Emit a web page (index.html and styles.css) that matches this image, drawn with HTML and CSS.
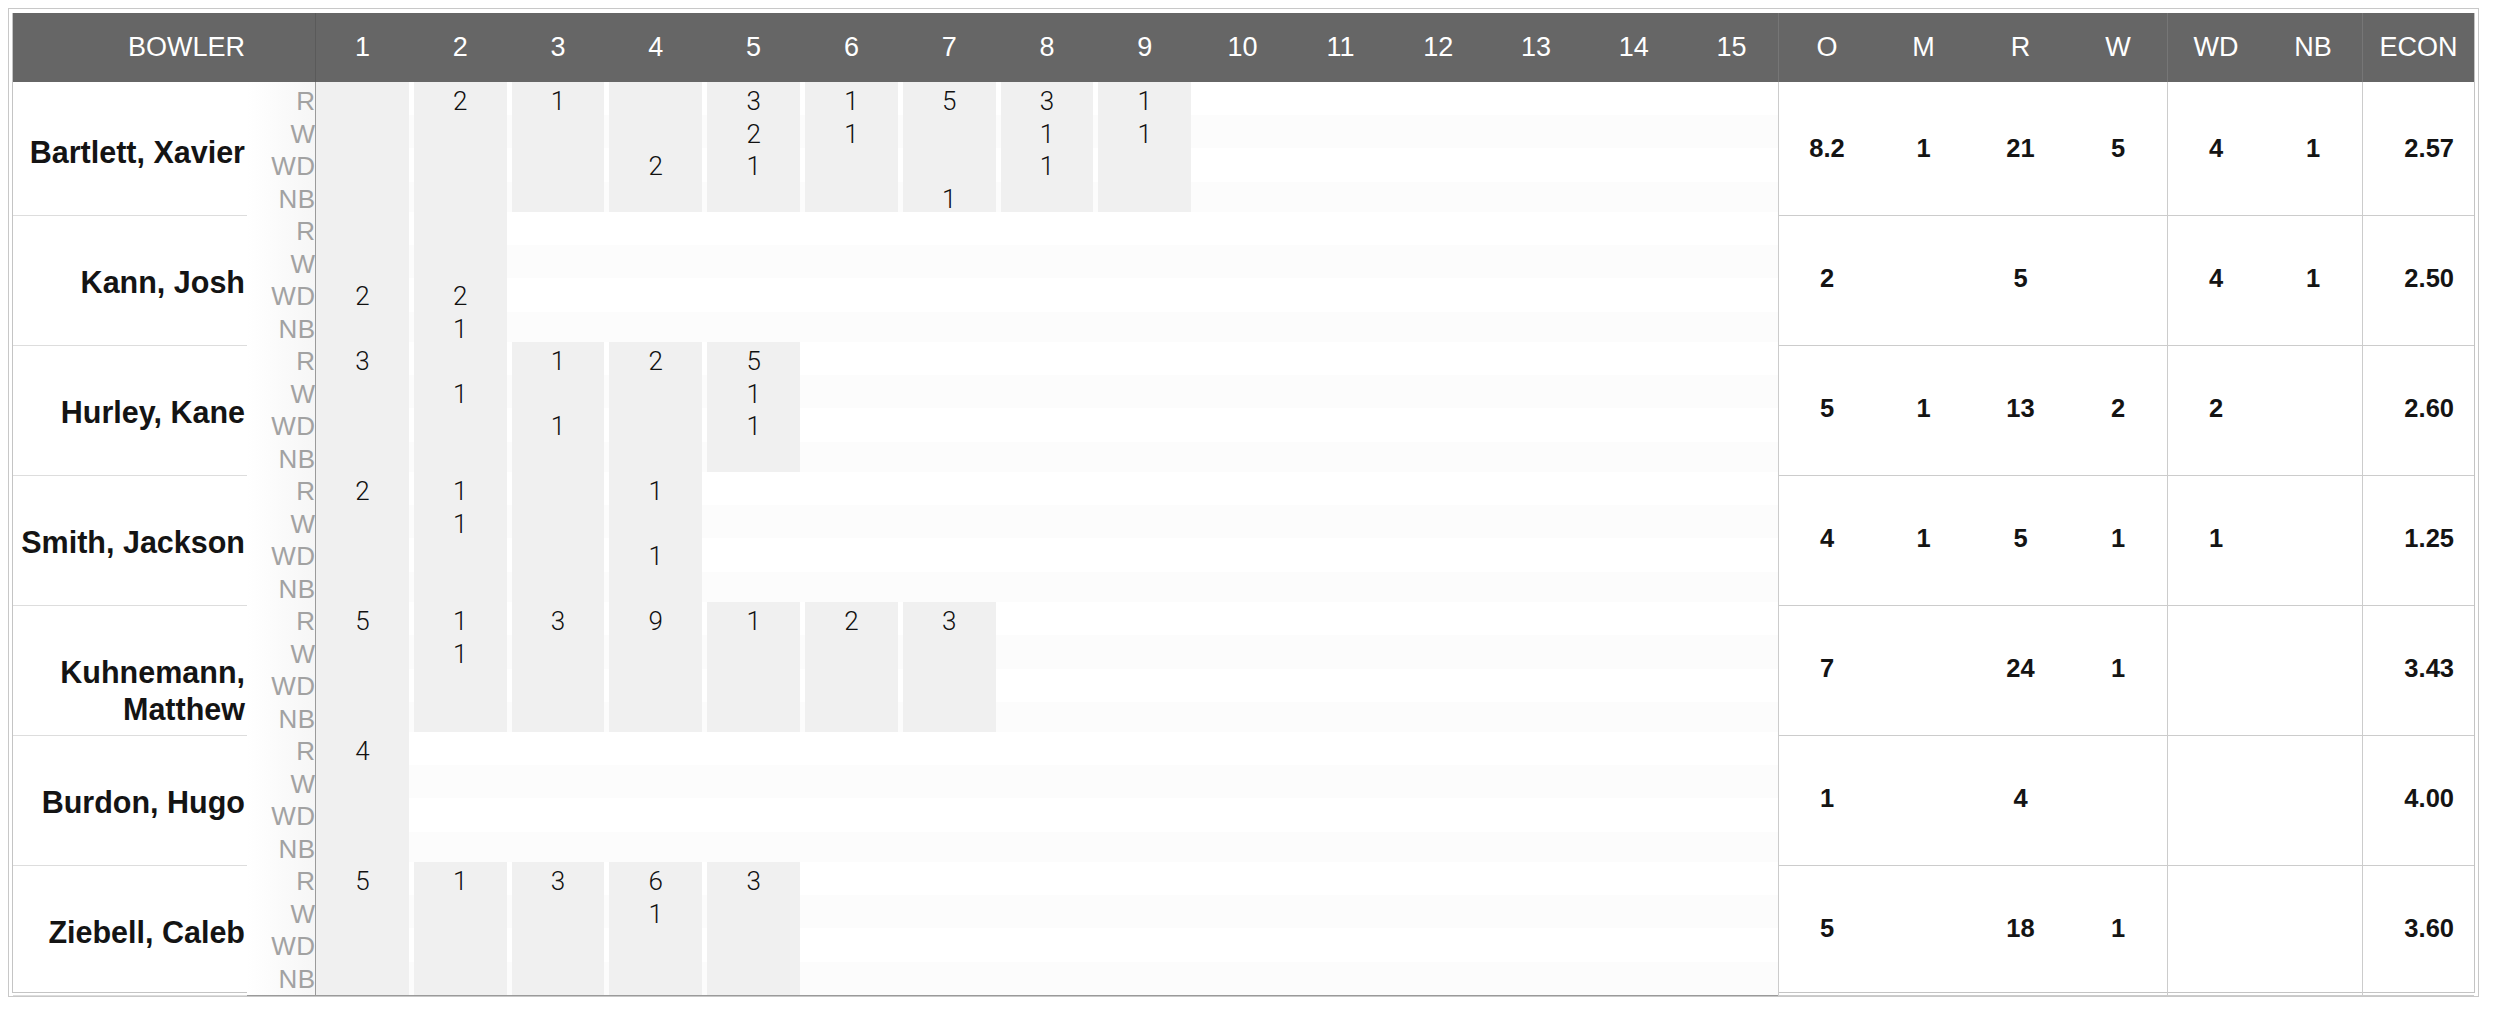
FILE: index.html
```html
<!DOCTYPE html>
<html>
<head>
<meta charset="utf-8">
<title>Bowling scorecard</title>
<link rel="stylesheet" href="styles.css">
</head>
<body>
<div class="sheet">
  <div class="table">
    <div class="head">
      <div class="bowler">BOWLER</div>
      <div class="overs-h">
        <span>1</span><span>2</span><span>3</span><span>4</span><span>5</span><span>6</span><span>7</span><span>8</span><span>9</span><span>10</span><span>11</span><span>12</span><span>13</span><span>14</span><span>15</span>
      </div>
      <div class="hs sep">O</div><div class="hs">M</div><div class="hs">R</div><div class="hs">W</div>
      <div class="hs sep">WD</div><div class="hs">NB</div>
      <div class="hs sep">ECON</div>
    </div>

    <div class="row">
      <div class="name">Bartlett, Xavier</div>
      <div class="labels"><i>R</i><i>W</i><i>WD</i><i>NB</i></div>
      <div class="overs">
        <div class="ov"><i></i><i></i><i></i><i></i></div>
        <div class="ov"><i>2</i><i></i><i></i><i></i></div>
        <div class="ov"><i>1</i><i></i><i></i><i></i></div>
        <div class="ov"><i></i><i></i><i>2</i><i></i></div>
        <div class="ov"><i>3</i><i>2</i><i>1</i><i></i></div>
        <div class="ov"><i>1</i><i>1</i><i></i><i></i></div>
        <div class="ov"><i>5</i><i></i><i></i><i>1</i></div>
        <div class="ov"><i>3</i><i>1</i><i>1</i><i></i></div>
        <div class="ov"><i>1</i><i>1</i><i></i><i></i></div>
      </div>
      <div class="st sep">8.2</div><div class="st">1</div><div class="st">21</div><div class="st">5</div>
      <div class="st sep">4</div><div class="st">1</div>
      <div class="st sep econ">2.57</div>
    </div>

    <div class="row">
      <div class="name">Kann, Josh</div>
      <div class="labels"><i>R</i><i>W</i><i>WD</i><i>NB</i></div>
      <div class="overs">
        <div class="ov"><i></i><i></i><i>2</i><i></i></div>
        <div class="ov"><i></i><i></i><i>2</i><i>1</i></div>
      </div>
      <div class="st sep">2</div><div class="st"></div><div class="st">5</div><div class="st"></div>
      <div class="st sep">4</div><div class="st">1</div>
      <div class="st sep econ">2.50</div>
    </div>

    <div class="row">
      <div class="name">Hurley, Kane</div>
      <div class="labels"><i>R</i><i>W</i><i>WD</i><i>NB</i></div>
      <div class="overs">
        <div class="ov"><i>3</i><i></i><i></i><i></i></div>
        <div class="ov"><i></i><i>1</i><i></i><i></i></div>
        <div class="ov"><i>1</i><i></i><i>1</i><i></i></div>
        <div class="ov"><i>2</i><i></i><i></i><i></i></div>
        <div class="ov"><i>5</i><i>1</i><i>1</i><i></i></div>
      </div>
      <div class="st sep">5</div><div class="st">1</div><div class="st">13</div><div class="st">2</div>
      <div class="st sep">2</div><div class="st"></div>
      <div class="st sep econ">2.60</div>
    </div>

    <div class="row">
      <div class="name">Smith, Jackson</div>
      <div class="labels"><i>R</i><i>W</i><i>WD</i><i>NB</i></div>
      <div class="overs">
        <div class="ov"><i>2</i><i></i><i></i><i></i></div>
        <div class="ov"><i>1</i><i>1</i><i></i><i></i></div>
        <div class="ov"><i></i><i></i><i></i><i></i></div>
        <div class="ov"><i>1</i><i></i><i>1</i><i></i></div>
      </div>
      <div class="st sep">4</div><div class="st">1</div><div class="st">5</div><div class="st">1</div>
      <div class="st sep">1</div><div class="st"></div>
      <div class="st sep econ">1.25</div>
    </div>

    <div class="row">
      <div class="name">Kuhnemann,<br>Matthew</div>
      <div class="labels"><i>R</i><i>W</i><i>WD</i><i>NB</i></div>
      <div class="overs">
        <div class="ov"><i>5</i><i></i><i></i><i></i></div>
        <div class="ov"><i>1</i><i>1</i><i></i><i></i></div>
        <div class="ov"><i>3</i><i></i><i></i><i></i></div>
        <div class="ov"><i>9</i><i></i><i></i><i></i></div>
        <div class="ov"><i>1</i><i></i><i></i><i></i></div>
        <div class="ov"><i>2</i><i></i><i></i><i></i></div>
        <div class="ov"><i>3</i><i></i><i></i><i></i></div>
      </div>
      <div class="st sep">7</div><div class="st"></div><div class="st">24</div><div class="st">1</div>
      <div class="st sep"></div><div class="st"></div>
      <div class="st sep econ">3.43</div>
    </div>

    <div class="row">
      <div class="name">Burdon, Hugo</div>
      <div class="labels"><i>R</i><i>W</i><i>WD</i><i>NB</i></div>
      <div class="overs">
        <div class="ov"><i>4</i><i></i><i></i><i></i></div>
      </div>
      <div class="st sep">1</div><div class="st"></div><div class="st">4</div><div class="st"></div>
      <div class="st sep"></div><div class="st"></div>
      <div class="st sep econ">4.00</div>
    </div>

    <div class="row">
      <div class="name">Ziebell, Caleb</div>
      <div class="labels"><i>R</i><i>W</i><i>WD</i><i>NB</i></div>
      <div class="overs">
        <div class="ov"><i>5</i><i></i><i></i><i></i></div>
        <div class="ov"><i>1</i><i></i><i></i><i></i></div>
        <div class="ov"><i>3</i><i></i><i></i><i></i></div>
        <div class="ov"><i>6</i><i>1</i><i></i><i></i></div>
        <div class="ov"><i>3</i><i></i><i></i><i></i></div>
      </div>
      <div class="st sep">5</div><div class="st"></div><div class="st">18</div><div class="st">1</div>
      <div class="st sep"></div><div class="st"></div>
      <div class="st sep econ">3.60</div>
    </div>
  </div>
</div>
</body>
</html>
```

FILE: styles.css
```css
html, body {
  background: #ffffff;
}
body {
  margin: 8px;
  font-family: "Liberation Sans", Arial, sans-serif;
  color: #111;
}
.sheet {
  width: 2471px;
  box-sizing: border-box;
  border: 1px solid #c8c8c8;
  padding: 4px 3px 3px 3px;
}
.table {
  border: 1px solid #c4c4c4;
  border-top: 0;
}
.head, .row {
  display: grid;
  grid-template-columns: 234px 68px 1463px 97px 97px 97px 98px 97px 98px 1fr;
}
.head {
  height: 69px;
  background: #666666;
  color: #ffffff;
  font-size: 27px;
  line-height: 1;
}
.head > div {
  display: flex;
  align-items: center;
  justify-content: center;
  box-sizing: border-box;
}
.head .bowler {
  grid-column: 1 / 3;
  justify-content: flex-end;
  padding-right: 70px;
}
.head .overs-h {
  display: grid;
  grid-template-columns: repeat(15, 1fr);
  column-gap: 5px;
  align-items: center;
  justify-items: center;
  border-left: 1px solid #5a5a5a;
}
.head .sep {
  border-left: 1px solid #767676;
}

.row {
  height: 130px;
}
.row > div {
  box-sizing: border-box;
}
.name {
  font-family: "Liberation Sans", Arial, sans-serif;
  font-weight: 700;
  font-size: 30.5px;
  line-height: 37px;
  color: #141414;
  text-align: right;
  white-space: nowrap;
  padding: 52px 2px 0 0;
  border-bottom: 1px solid #dddddd;
}
.labels {
  padding-top: 3px;
  text-align: right;
  color: #a2a2a2;
  font-size: 26px;
  letter-spacing: 0.5px;
  line-height: 32.5px;
  border-bottom: 1px solid #9a9a9a;
  background: linear-gradient(to right, rgba(255,255,255,1) 0%, rgba(246,246,246,1) 100%);
}
.labels i, .ov i {
  display: block;
  font-style: normal;
  height: 32.5px;
}
.labels i {
  margin-right: -0.5px;
}
.overs {
  display: grid;
  grid-template-columns: repeat(15, 1fr);
  column-gap: 5px;
  border-left: 1px solid #9a9a9a;
  border-bottom: 1px solid #9a9a9a;
  background: linear-gradient(to bottom, #ffffff 0 25%, #fcfcfc 25% 50%, #ffffff 50% 75%, #fcfcfc 75% 100%);
}
.ov {
  background: #f0f0f0;
  padding-top: 3px;
  text-align: center;
  font-family: "Roboto", "Liberation Sans", sans-serif;
  font-weight: 300;
  font-size: 26px;
  line-height: 32.5px;
  color: #111;
}
.st {
  display: flex;
  align-items: center;
  justify-content: center;
  font-family: "Liberation Sans", Arial, sans-serif;
  font-weight: 700;
  font-size: 25.5px;
  line-height: 1;
  color: #141414;
  border-bottom: 1px solid #cccccc;
}
.st.sep {
  border-left: 1px solid #cccccc;
}
.st.econ {
  justify-content: flex-end;
  padding-right: 20px;
}
```
